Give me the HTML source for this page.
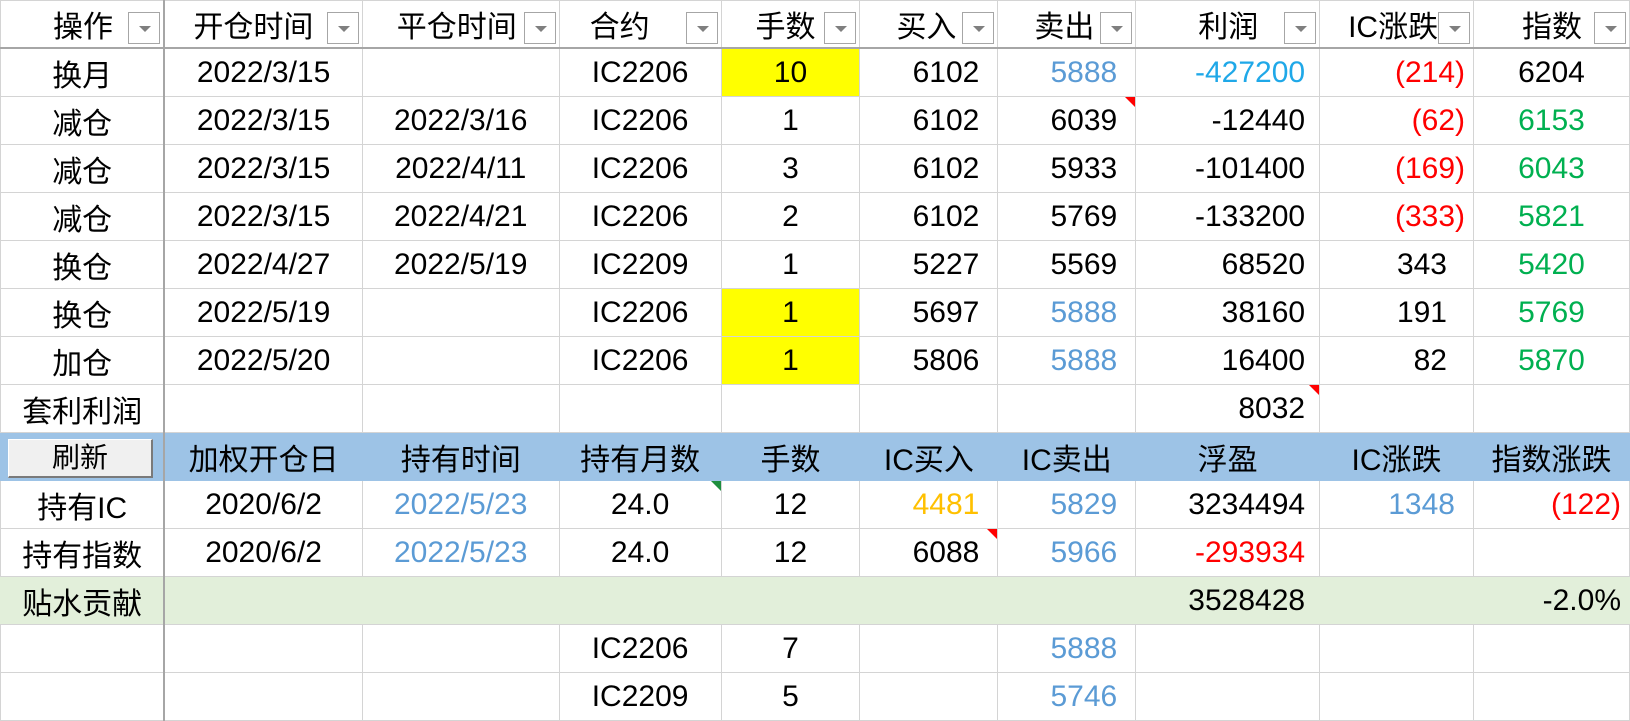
<!DOCTYPE html>
<html><head><meta charset="utf-8"><style>
body{margin:0;width:1630px;height:721px;overflow:hidden;background:#fff;font-family:"Liberation Sans","Noto Sans CJK SC",sans-serif;}
table{border-collapse:collapse;table-layout:fixed;position:absolute;left:0;top:0;}
td{border:1px solid #d4d4d4;padding:0;font-size:30px;white-space:nowrap;overflow:visible;position:relative;height:47px;color:#000;text-align:center}
td.r{text-align:right;padding-right:18px}
td.rp{text-align:right;padding-right:14px}
td.ra{text-align:right;padding-right:8px}
tr.h td{height:46px;border-bottom:2px solid #a6a6a6;text-align:left;padding-left:0}
td.c0{border-right:2px solid #a6a6a6}
.dd{position:absolute;right:3px;top:11px;width:32px;height:32px;border:1px solid #a6a6a6;background:#fff;box-sizing:border-box}
.dd:after{content:"";position:absolute;left:10px;top:13px;border-left:6px solid transparent;border-right:6px solid transparent;border-top:6px solid #7f7f7f}
.b{color:#5b9bd5}.cy{color:#1fa8e8}.rd{color:#ff0000}.g{color:#00b050}.o{color:#ffc000}
.y{background:#ffff00}
tr.blue td{background:#9dc3e6;border-color:#9dc3e6}
tr.grn td{background:#e2efda;border-left-color:#e2efda;border-right-color:#e2efda}
.tri:after{content:"";position:absolute;right:0;top:0;border-left:10px solid transparent;border-top:10px solid #ff0000}
.trig:after{content:"";position:absolute;right:0;top:0;border-left:10px solid transparent;border-top:10px solid #1e8e3e}
.btn{position:absolute;left:7px;top:6px;width:145px;height:39px;background:#f0f0f0;border:1px solid #fff;border-right:2px solid #7a7a7a;border-bottom:2px solid #7a7a7a;box-sizing:border-box;font-size:28px;line-height:36px;text-align:center}
</style></head><body>
<table>
<colgroup><col style="width:164px"><col style="width:198px"><col style="width:197px"><col style="width:162px"><col style="width:139px"><col style="width:138px"><col style="width:138px"><col style="width:184px"><col style="width:154px"><col style="width:156px"></colgroup>
<tr class="h">
<td class="c0" style="padding-left:52px">操作<span class="dd"></span></td>
<td style="padding-left:28px">开仓时间<span class="dd"></span></td>
<td style="padding-left:34px">平仓时间<span class="dd"></span></td>
<td style="padding-left:30px">合约<span class="dd"></span></td>
<td style="padding-left:34px">手数<span class="dd"></span></td>
<td style="padding-left:36px">买入<span class="dd"></span></td>
<td style="padding-left:36px">卖出<span class="dd"></span></td>
<td style="padding-left:62px">利润<span class="dd"></span></td>
<td style="padding-left:28px">IC涨跌<span class="dd"></span></td>
<td style="padding-left:48px">指数<span class="dd"></span></td>
</tr>
<tr><td class="c0">换月</td><td>2022/3/15</td><td></td><td>IC2206</td><td class="y">10</td><td class="r">6102</td><td class="r b">5888</td><td class="rp cy">-427200</td><td class="ra rd">(214)</td><td>6204</td></tr>
<tr><td class="c0">减仓</td><td>2022/3/15</td><td>2022/3/16</td><td>IC2206</td><td>1</td><td class="r">6102</td><td class="r tri">6039</td><td class="rp">-12440</td><td class="ra rd">(62)</td><td class="g">6153</td></tr>
<tr><td class="c0">减仓</td><td>2022/3/15</td><td>2022/4/11</td><td>IC2206</td><td>3</td><td class="r">6102</td><td class="r">5933</td><td class="rp">-101400</td><td class="ra rd">(169)</td><td class="g">6043</td></tr>
<tr><td class="c0">减仓</td><td>2022/3/15</td><td>2022/4/21</td><td>IC2206</td><td>2</td><td class="r">6102</td><td class="r">5769</td><td class="rp">-133200</td><td class="ra rd">(333)</td><td class="g">5821</td></tr>
<tr><td class="c0">换仓</td><td>2022/4/27</td><td>2022/5/19</td><td>IC2209</td><td>1</td><td class="r">5227</td><td class="r">5569</td><td class="rp">68520</td><td class="ra" style="padding-right:26px">343</td><td class="g">5420</td></tr>
<tr><td class="c0">换仓</td><td>2022/5/19</td><td></td><td>IC2206</td><td class="y">1</td><td class="r">5697</td><td class="r b">5888</td><td class="rp">38160</td><td class="ra" style="padding-right:26px">191</td><td class="g">5769</td></tr>
<tr><td class="c0">加仓</td><td>2022/5/20</td><td></td><td>IC2206</td><td class="y">1</td><td class="r">5806</td><td class="r b">5888</td><td class="rp">16400</td><td class="ra" style="padding-right:26px">82</td><td class="g">5870</td></tr>
<tr><td class="c0">套利利润</td><td></td><td></td><td></td><td></td><td></td><td></td><td class="rp tri">8032</td><td></td><td></td></tr>
<tr class="blue"><td class="c0" style="border-right-color:#a6a6a6"><div class="btn">刷新</div></td><td>加权开仓日</td><td>持有时间</td><td>持有月数</td><td>手数</td><td>IC买入</td><td>IC卖出</td><td>浮盈</td><td>IC涨跌</td><td>指数涨跌</td></tr>
<tr><td class="c0">持有IC</td><td>2020/6/2</td><td class="b">2022/5/23</td><td class="trig">24.0</td><td>12</td><td class="r o">4481</td><td class="r b">5829</td><td class="rp">3234494</td><td class="ra b" style="padding-right:18px">1348</td><td class="ra rd" style="padding-right:8px">(122)</td></tr>
<tr><td class="c0">持有指数</td><td>2020/6/2</td><td class="b">2022/5/23</td><td>24.0</td><td>12</td><td class="r tri">6088</td><td class="r b">5966</td><td class="rp rd">-293934</td><td></td><td></td></tr>
<tr class="grn"><td class="c0" style="border-right-color:#a6a6a6">贴水贡献</td><td></td><td></td><td></td><td></td><td></td><td></td><td class="rp">3528428</td><td></td><td class="ra">-2.0%</td></tr>
<tr><td class="c0"></td><td></td><td></td><td>IC2206</td><td>7</td><td></td><td class="r b">5888</td><td></td><td></td><td></td></tr>
<tr><td class="c0"></td><td></td><td></td><td>IC2209</td><td>5</td><td></td><td class="r b">5746</td><td></td><td></td><td></td></tr>
</table>
</body></html>
